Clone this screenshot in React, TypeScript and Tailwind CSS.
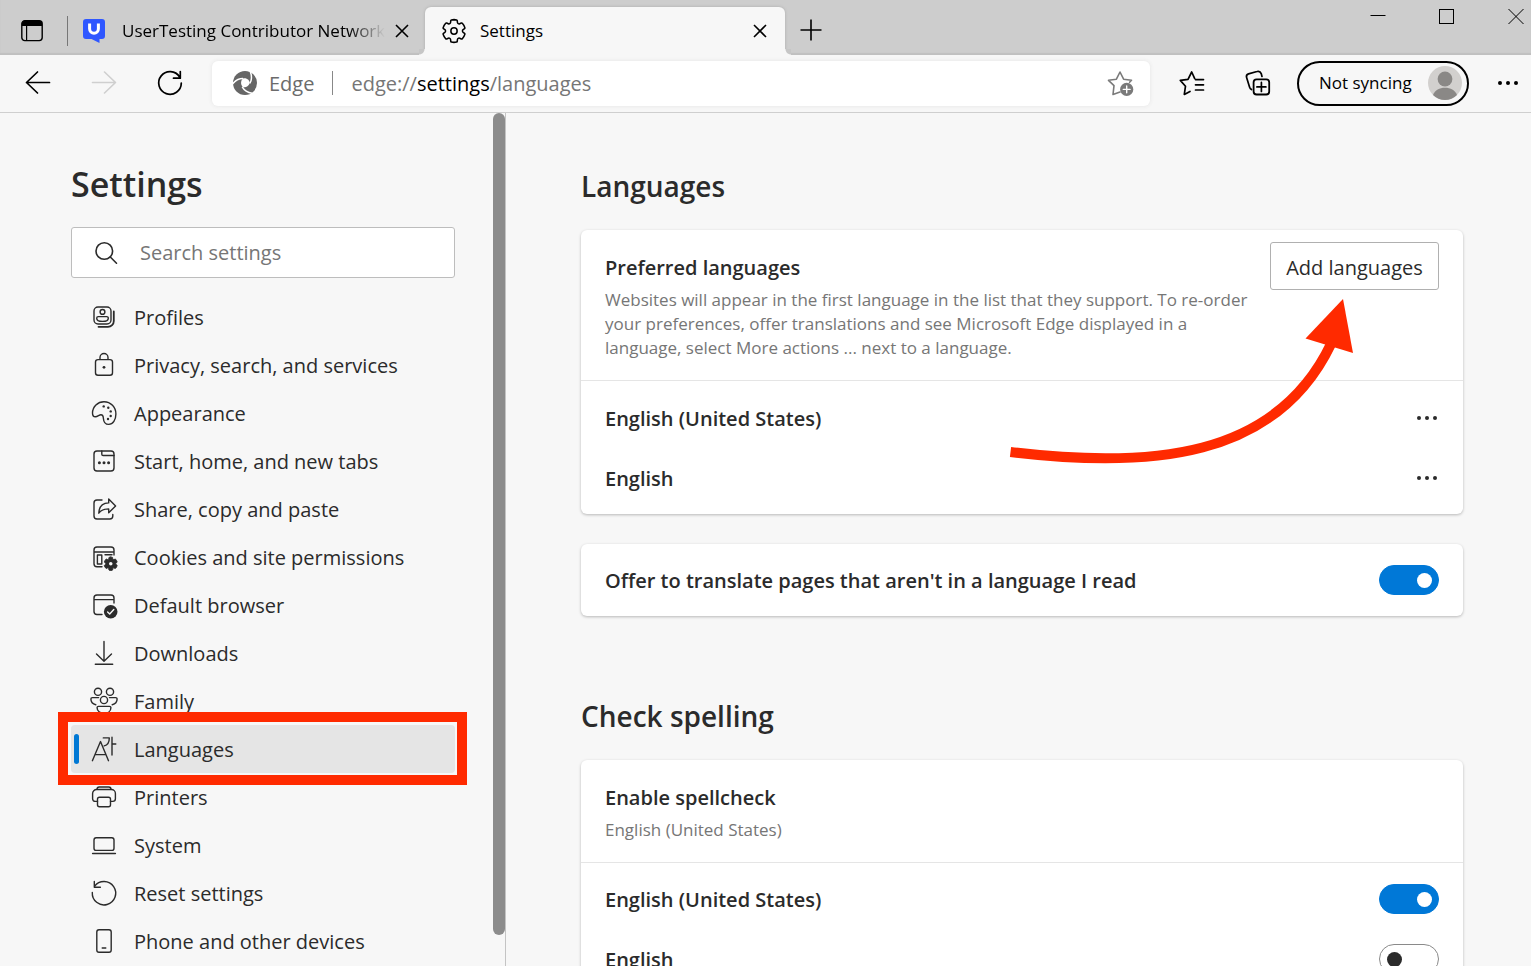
import { useState } from "react";
import type { ReactNode } from "react";

type IconProps = { children: ReactNode; className?: string };

// 28px line icon used in the side menu and the toolbar
function Icon({ children, className = "" }: IconProps) {
  return (
    <svg
      viewBox="0 0 28 28"
      className={`size-7 shrink-0 ${className}`}
      fill="none"
      stroke="currentColor"
      strokeWidth="1.4"
      strokeLinecap="round"
      strokeLinejoin="round"
      aria-hidden="true"
    >
      {children}
    </svg>
  );
}

const GEAR =
  "M12.012 2.25c.734.008 1.465.093 2.182.253a.75.75 0 0 1 .582.649l.17 1.527a1.384 1.384 0 0 0 1.927 1.116l1.401-.615a.75.75 0 0 1 .85.174 9.792 9.792 0 0 1 2.204 3.792.75.75 0 0 1-.271.825l-1.242.916a1.381 1.381 0 0 0 0 2.226l1.243.915a.75.75 0 0 1 .272.826 9.797 9.797 0 0 1-2.204 3.792.75.75 0 0 1-.848.175l-1.407-.617a1.38 1.38 0 0 0-1.926 1.114l-.169 1.526a.75.75 0 0 1-.572.647 9.518 9.518 0 0 1-4.406 0 .75.75 0 0 1-.572-.647l-.168-1.524a1.382 1.382 0 0 0-1.926-1.11l-1.406.616a.75.75 0 0 1-.849-.175 9.798 9.798 0 0 1-2.204-3.796.75.75 0 0 1 .272-.826l1.243-.916a1.38 1.38 0 0 0 0-2.226l-1.243-.914a.75.75 0 0 1-.271-.826 9.793 9.793 0 0 1 2.204-3.792.75.75 0 0 1 .85-.174l1.4.615a1.387 1.387 0 0 0 1.93-1.118l.17-1.526a.75.75 0 0 1 .583-.65c.717-.159 1.45-.243 2.201-.252Z";

const menu: { label: string; icon: ReactNode }[] = [
  {
    label: "Profiles",
    icon: (
      <>
        <rect x="4" y="4" width="17" height="17" rx="4" />
        <circle cx="12.5" cy="8.9" r="2.4" />
        <path d="M8.3 13.6H16.7A1.6 1.6 0 0 1 18.3 15.2C18.3 17.4 15.6 18.4 12.5 18.4S6.7 17.4 6.7 15.2A1.6 1.6 0 0 1 8.3 13.6Z" />
        <path d="M23.8 8.5V18A5.8 5.8 0 0 1 18 23.8H8.5" strokeWidth="1.8" />
      </>
    ),
  },
  {
    label: "Privacy, search, and services",
    icon: (
      <>
        <rect x="5.5" y="8.6" width="17" height="15.6" rx="2.5" />
        <path d="M10 8.4V6.5a4 4 0 0 1 8 0V8.4" />
        <circle cx="14" cy="16.3" r="1.4" fill="currentColor" stroke="none" />
      </>
    ),
  },
  {
    label: "Appearance",
    icon: (
      <>
        <path d="M2.5 14C2.5 7.5 7.8 2.7 14 2.7C20.8 2.7 25.9 8.2 25.9 15C25.9 21 23 25.4 18.7 25.4C14.8 25.4 13.6 22.5 13.4 19.5C13.3 17.3 12.9 15.7 10.9 15.7C9.2 15.7 7.6 17.8 5.4 17.8C3.4 17.8 2.5 16.2 2.5 14Z" />
        <g fill="currentColor" stroke="none">
          <circle cx="13.7" cy="7.4" r="1.2" />
          <circle cx="18.3" cy="8.8" r="1.2" />
          <circle cx="20.7" cy="12.4" r="1.2" />
          <circle cx="20.7" cy="17" r="1.2" />
          <circle cx="18" cy="20" r="1.2" />
        </g>
      </>
    ),
  },
  {
    label: "Start, home, and new tabs",
    icon: (
      <>
        <rect x="4" y="4" width="20" height="20" rx="3" />
        <path d="M11.8 4V7.2A1.3 1.3 0 0 0 13.1 8.5H24" />
        <g fill="currentColor" stroke="none">
          <circle cx="9.4" cy="15.7" r="1.5" />
          <circle cx="14" cy="15.7" r="1.5" />
          <circle cx="18.6" cy="15.7" r="1.5" />
        </g>
      </>
    ),
  },
  {
    label: "Share, copy and paste",
    icon: (
      <>
        <path d="M12 5H7A3 3 0 0 0 4 8V21A3 3 0 0 0 7 24H19.8A3 3 0 0 0 22.8 21V19.5" />
        <path d="M18.7 4L25.6 11L18.7 17.7V13.9C14 13.9 11 15 8.8 18.2C9 12 12.5 8.1 18.7 7.9Z" />
      </>
    ),
  },
  {
    label: "Cookies and site permissions",
    icon: (
      <>
        <path d="M24 12V7A3 3 0 0 0 21 4H7A3 3 0 0 0 4 7V20.7A3 3 0 0 0 7 23.7H12M4 9H24" />
        <rect x="7.4" y="12" width="4.4" height="9" />
        <path d="M15 11.8H22" />
        <g transform="translate(12.6 12.6) scale(.68)">
          <path d={GEAR} fill="currentColor" />
          <circle cx="12" cy="12" r="2.6" fill="#f7f7f7" stroke="none" />
        </g>
      </>
    ),
  },
  {
    label: "Default browser",
    icon: (
      <>
        <path d="M24 12V7A3 3 0 0 0 21 4H7A3 3 0 0 0 4 7V20.5A3 3 0 0 0 7 23.5H12M4 8.6H24" />
        <circle cx="20.7" cy="20.7" r="6.8" fill="currentColor" stroke="none" />
        <path d="M17.6 21L19.7 23L23.8 18.6" stroke="#f7f7f7" />
      </>
    ),
  },
  { label: "Downloads", icon: <path d="M14 2.5V22M6.5 15L14 22.3L21.5 15M5.3 25.2H22.7" /> },
  {
    label: "Family",
    icon: (
      <>
        <circle cx="8" cy="4.8" r="3.6" />
        <circle cx="20" cy="4.8" r="3.6" />
        <circle cx="14" cy="13" r="3.6" />
        <path d="M8.6 10.6H2.4A1.5 1.5 0 0 0 .9 12.1C.9 15 3 17.2 5.8 17.7M19.4 10.6H25.6A1.5 1.5 0 0 1 27.1 12.1C27.1 15 25 17.2 22.2 17.7" />
        <path d="M8.4 19.4H19.6A1.3 1.3 0 0 1 20.9 20.7C20.9 24 18 26.4 14 26.4S7.1 24 7.1 20.7A1.3 1.3 0 0 1 8.4 19.4Z" />
      </>
    ),
  },
  {
    label: "Languages",
    icon: (
      <path d="M2.4 25.7L10.5 6.6L18.5 25.7M5.2 19.6H15.8M13.3 2.9H19.3C19.3 7.5 17.8 10 14.2 10.9M22 2.3V20M22 9H25.8" />
    ),
  },
  {
    label: "Printers",
    icon: (
      <>
        <path d="M7.5 18.4H5.2A2.6 2.6 0 0 1 2.6 15.8V10.5A4 4 0 0 1 6.6 6.5H21.4A4 4 0 0 1 25.4 10.5V15.8A2.6 2.6 0 0 1 22.8 18.4H20.5" />
        <path d="M7 6.3A2.3 2.3 0 0 1 9.3 4H18.7A2.3 2.3 0 0 1 21 6.3" />
        <rect x="7.5" y="14.2" width="13" height="9.6" rx="2" />
      </>
    ),
  },
  {
    label: "System",
    icon: (
      <>
        <rect x="4" y="6.8" width="20" height="12.6" rx="2.2" />
        <path d="M2.6 22.5H25.4" />
      </>
    ),
  },
  {
    label: "Reset settings",
    icon: <path d="M2.3 13.5A11.7 11.7 0 1 0 4.6 7.2M4.3 2.4V8.3H10.4" />,
  },
  {
    label: "Phone and other devices",
    icon: (
      <>
        <rect x="6.8" y="2.7" width="14.4" height="22.6" rx="2.2" />
        <path d="M12.2 21H15.8" />
      </>
    ),
  },
];

function CloseIcon() {
  return (
    <svg viewBox="0 0 14 14" className="size-3.5" stroke="currentColor" strokeWidth="1.6" aria-hidden="true">
      <path d="M1 1L13 13M13 1L1 13" />
    </svg>
  );
}

function Dots() {
  return (
    <svg viewBox="0 0 20 4" className="w-5 h-1" fill="currentColor" aria-hidden="true">
      <circle cx="2" cy="2" r="2" />
      <circle cx="10" cy="2" r="2" />
      <circle cx="18" cy="2" r="2" />
    </svg>
  );
}

function TabStrip() {
  return (
    <div className="flex h-[55px] shrink-0 bg-[#cdcdcd] shadow-[inset_0_-2px_1px_#c0c0c0] text-black">
      <div className="flex w-[425px] items-center pl-[21px] pt-[7px]">
        <button aria-label="Tab actions menu">
          <svg viewBox="0 0 22 22" className="size-[22px]" aria-hidden="true">
            <rect x=".8" y=".8" width="20.4" height="19.8" rx="3" fill="none" stroke="#000" strokeWidth="1.4" />
            <path d="M1 6V3.5A2.7 2.7 0 0 1 3.7 .8H18.3A2.7 2.7 0 0 1 21 3.5V6Z" />
            <path d="M5.6 6V20.6" stroke="#000" strokeWidth="1.2" />
          </svg>
        </button>
        <span className="ml-6 h-[30px] w-px bg-[#777]" />
        <svg viewBox="0 0 24 24" className="ml-[15px] size-6 shrink-0" aria-hidden="true">
          <path
            d="M3 0H19A3 3 0 0 1 22 3V17A3 3 0 0 1 19 20H16.5V24L8.5 20H3A3 3 0 0 1 0 17V3A3 3 0 0 1 3 0Z"
            fill="#2f57ff"
          />
          <path d="M6.6 4.4V9.8A4.4 4.4 0 0 0 15.4 9.8V4.4" fill="none" stroke="#fff" strokeWidth="3" />
        </svg>
        <span className="ml-[15px] flex-1 min-w-0 overflow-hidden whitespace-nowrap text-[17px] leading-7 [mask-image:linear-gradient(to_right,#000_86%,transparent)]">
          UserTesting Contributor Network
        </span>
        <button aria-label="Close tab" className="ml-2.5 mr-4">
          <CloseIcon />
        </button>
      </div>

      <div className="relative mt-[7px] flex w-[360px] items-center rounded-t-md bg-[#f7f7f7] pl-[15px] pr-[18px] shadow-[0_0_3px_#aaa] [clip-path:inset(-4px_-6px_0_-6px)]">
        {/* curved feet of the active tab */}
        <span className="absolute -left-1.5 bottom-0 size-1.5 bg-[radial-gradient(circle_at_0_0,#c6c6c6_5px,#f7f7f7_6px)]" />
        <span className="absolute -right-1.5 bottom-0 size-1.5 bg-[radial-gradient(circle_at_100%_0,#c6c6c6_5px,#f7f7f7_6px)]" />
        <svg
          viewBox="0 0 24 24"
          className="size-7"
          fill="none"
          stroke="currentColor"
          strokeWidth="1.3"
          aria-hidden="true"
        >
          <path d={GEAR} />
          <circle cx="12" cy="12" r="2.7" />
        </svg>
        <span className="ml-3 flex-1 text-[17px] leading-7">Settings</span>
        <button aria-label="Close tab">
          <CloseIcon />
        </button>
      </div>

      <button aria-label="New tab" className="ml-[15px] mt-1">
        <svg viewBox="0 0 22 22" className="size-[22px]" stroke="currentColor" strokeWidth="1.6" aria-hidden="true">
          <path d="M11 .5V21.5M.5 11H21.5" />
        </svg>
      </button>

      <div className="ml-auto flex items-start gap-[53px] pr-[7px] pt-2">
        <button aria-label="Minimize">
          <svg viewBox="0 0 16 16" className="size-4" stroke="currentColor" aria-hidden="true">
            <path d="M.5 7.5H15.5" />
          </svg>
        </button>
        <button aria-label="Maximize">
          <svg viewBox="0 0 16 16" className="size-4" fill="none" stroke="currentColor" aria-hidden="true">
            <rect x=".5" y="1.5" width="14" height="14" />
          </svg>
        </button>
        <button aria-label="Close window">
          <svg viewBox="0 0 16 16" className="size-4" stroke="currentColor" aria-hidden="true">
            <path d="M.5 1L15.5 16M15.5 1L.5 16" />
          </svg>
        </button>
      </div>
    </div>
  );
}

function Toolbar() {
  return (
    <div className="flex h-[58px] shrink-0 items-center border-b border-[#cfcfcf] bg-[#f7f7f7] pb-px pl-[5px] text-black">
      <button aria-label="Back" className="flex w-[66px] justify-center">
        <Icon>
          <path d="M25.5 13.5H2.5M13.5 3L2.5 13.5L13.5 24" strokeWidth="1.7" />
        </Icon>
      </button>
      <button aria-label="Forward" disabled className="flex w-[66px] justify-center text-[#cfcfcf]">
        <Icon>
          <path d="M2.5 13.5H25.5M14.5 3L25.5 13.5L14.5 24" strokeWidth="1.6" />
        </Icon>
      </button>
      <button aria-label="Refresh" className="flex w-[66px] justify-center">
        <Icon>
          <path d="M25.3 14A11.3 11.3 0 1 1 23.6 8M24.3 2.6V9.2H17.5" strokeWidth="1.7" />
        </Icon>
      </button>

      <div className="ml-[9px] flex h-[45px] min-w-0 flex-1 items-center rounded-md bg-white pl-[21px] pr-4 text-[20px] leading-7 text-[#6b6b6b] shadow-[0_0_4px_#e4e4e4]">
        <svg viewBox="0 0 24 24" className="size-6 shrink-0" aria-hidden="true">
          <circle cx="12" cy="12" r="12" fill="#666" />
          <g fill="none" stroke="#fff" strokeWidth="1.5">
            <path d="M10 7.6C6 7.6 2.6 9.2-.5 13" />
            <path d="M10 7.6C6 7.6 2.6 9.2-.5 13" transform="rotate(120 12 12)" />
            <path d="M10 7.6C6 7.6 2.6 9.2-.5 13" transform="rotate(240 12 12)" />
          </g>
          <path d="M10 7.4C14 6.6 17 9.4 16.6 12.6C15.4 15.4 12.6 16.8 10 16C7.4 13.6 7.4 10 10 7.4Z" fill="#fff" />
        </svg>
        <span className="ml-3 pt-0.5">Edge</span>
        <span className="mx-[18px] h-6 w-px bg-[#888]" />
        <div
          role="textbox"
          tabIndex={0}
          aria-label="Address"
          className="flex-1 whitespace-nowrap pt-0.5 text-[#767676]"
        >
          edge://<span className="text-black">settings</span>/languages
        </div>
        <button aria-label="Add this page to favorites" className="text-[#7a7a7a]">
          <Icon>
            <path
              d="M14 23L7 25.5L8 16.6L2.5 11.3L10.4 10.2L14 3L17.6 10.2L25.5 11.3L23.6 13.2"
              strokeWidth="1.6"
            />
            <circle cx="20.7" cy="20.4" r="6.6" fill="currentColor" stroke="none" />
            <path d="M20.7 17V23.8M17.3 20.4H24.1" stroke="#fff" />
          </Icon>
        </button>
      </div>

      <button aria-label="Favorites" className="ml-[9px] flex w-[66px] justify-center">
        <Icon>
          <path
            d="M12 22.4L6.3 25.4L7.5 17.2L2.3 11.4L10 10.4L13.7 3L16.6 9.4M17.5 10.6H25.5M17.5 15.8H25.5M17.5 21H25.5"
            strokeWidth="1.7"
          />
        </Icon>
      </button>
      <button aria-label="Collections" className="flex w-[66px] justify-center">
        <Icon>
          <path
            d="M7.5 20.5C6.5 20 6 19.3 5.6 18.2L2.6 8.6A3 3 0 0 1 4.5 4.9L13 2.5A3.4 3.4 0 0 1 17.2 4.6L18 7.4"
            strokeWidth="1.7"
          />
          <rect x="9.6" y="10.3" width="15.6" height="15.2" rx="3" strokeWidth="1.8" />
          <path d="M17.4 13.4V22.4M12.9 17.9H21.9" strokeWidth="1.7" />
        </Icon>
      </button>
      <button className="ml-1.5 flex h-[45px] w-[172px] items-center justify-between rounded-full border-2 border-black pl-5 pr-[5px] text-[17px] leading-7">
        Not syncing
        <svg viewBox="0 0 34 34" className="size-[34px]" aria-hidden="true">
          <circle cx="17" cy="17" r="17" fill="#d2d0ce" />
          <circle cx="17" cy="13" r="7.4" fill="#8a8886" />
          <path d="M5 29C7 24 11.5 21.8 17 21.8S27 24 29 29A17 17 0 0 1 5 29Z" fill="#8a8886" />
        </svg>
      </button>
      <button aria-label="Settings and more" className="ml-4 flex w-[46px] justify-center">
        <Dots />
      </button>
    </div>
  );
}

function Sidebar({ current, onSelect }: { current: string; onSelect: (label: string) => void }) {
  return (
    <aside className="flex w-[506px] shrink-0 justify-between border-r border-[#c4c4c4] pl-[71px]">
      <div className="w-[384px] pt-[50px]">
        <h1 className="text-[34px] font-semibold leading-[42px]">Settings</h1>
        <div className="mt-[22px] flex h-[51px] items-center rounded-[3px] border border-[#bdbdbd] bg-white pl-5">
          <label htmlFor="search" aria-label="Search settings">
            <Icon>
              <circle cx="12.3" cy="12" r="8.3" strokeWidth="1.6" />
              <path d="M18.3 18L24.5 24.2" strokeWidth="1.6" />
            </Icon>
          </label>
          <input
            id="search"
            type="search"
            placeholder="Search settings"
            className="ml-5 min-w-0 flex-1 text-[20px] leading-7 outline-none placeholder:text-[#767676]"
          />
        </div>
        <nav aria-label="Settings" className="mt-[15px]">
          <ul>
            {menu.map(({ label, icon }) => (
              <li key={label} className="relative">
                <a
                  href="#"
                  onClick={() => onSelect(label)}
                  className={`flex h-12 items-center gap-4 rounded pl-[19px] text-[20px] leading-7 ${
                    label === current ? "bg-[#e5e5e5]" : ""
                  }`}
                >
                  <Icon>{icon}</Icon>
                  <span className="pt-0.5">{label}</span>
                </a>
                {label === current && (
                  <>
                    <span className="absolute left-[3px] top-[9px] h-[30px] w-[5px] rounded-sm bg-[#0078d4]" />
                    {/* callout box */}
                    <span className="pointer-events-none absolute -bottom-3 -left-[13px] -right-3 -top-[13px] z-10 border-10 border-[#ff2a00]" />
                  </>
                )}
              </li>
            ))}
          </ul>
        </nav>
      </div>
      <div className="h-[822px] w-3 rounded-full bg-[#8c8c8c]" />
    </aside>
  );
}

function Card({ children }: { children: ReactNode }) {
  return (
    <section className="relative rounded-md bg-white shadow-[0_1px_3px_rgba(0,0,0,0.26)]">
      {children}
    </section>
  );
}

function Toggle({ id, defaultChecked = false }: { id: string; defaultChecked?: boolean }) {
  return (
    <input
      id={id}
      type="checkbox"
      role="switch"
      defaultChecked={defaultChecked}
      className="flex h-[30px] w-[60px] shrink-0 appearance-none items-center rounded-full border border-[#8a8a8a] bg-white px-[7px] before:size-[15px] before:rounded-full before:bg-[#2b2b2b] checked:justify-end checked:border-[#0078d7] checked:bg-[#0078d7] checked:px-1.5 checked:before:bg-white"
    />
  );
}

const rowText = "text-[20px] font-semibold leading-7";

export default function App() {
  const [current, setCurrent] = useState("Languages");

  return (
    <div className="flex h-screen flex-col overflow-hidden bg-[#f7f7f7] font-['Open_Sans',sans-serif] text-[#2b2b2b]">
      <TabStrip />
      <Toolbar />
      <div className="flex min-h-0 flex-1 overflow-hidden">
        <Sidebar current={current} onSelect={setCurrent} />
        <main className="min-w-0 flex-1 pl-[75px] pr-[68px] pt-[54px]">
          <h2 className="mb-[25px] text-[28px] font-semibold leading-[38px]">Languages</h2>
          <Card>
            <div className="flex justify-between border-b border-[#e5e5e5] px-6 pb-5">
              <div className="max-w-[660px] pt-6">
                <h3 className={rowText}>Preferred languages</h3>
                <p className="mt-1.5 text-[17px] leading-6 text-[#767676]">
                  Websites will appear in the first language in the list that they support. To re-order your
                  preferences, offer translations and see Microsoft Edge displayed in a language, select More
                  actions ... next to a language.
                </p>
              </div>
              <button className="mt-3 h-12 w-[169px] shrink-0 rounded-[3px] border border-[#b0b0b0] pt-1 text-[20px] leading-7">
                Add languages
              </button>
            </div>
            <ul className="pb-1.5 pl-6 pr-[26px] pt-[7px]">
              {["English (United States)", "English"].map((name) => (
                <li key={name} className="flex h-[60px] items-center justify-between">
                  <span className={`pt-0.5 ${rowText}`}>{name}</span>
                  <button aria-label={`More actions for ${name}`}>
                    <Dots />
                  </button>
                </li>
              ))}
            </ul>
            {/* arrow pointing at the Add languages button */}
            <svg
              viewBox="0 0 360 180"
              className="pointer-events-none absolute right-[103px] top-[60px] h-[180px] w-[360px]"
              aria-hidden="true"
            >
              <path d="M10.5 162C150 179 276 169 331 54" fill="none" stroke="#ff2a00" strokeWidth="10" />
              <path d="M343 9L305.5 48.5L353 63Z" fill="#ff2a00" />
            </svg>
          </Card>

          <div className="mt-[30px]">
            <Card>
              <div className="flex h-[72px] items-center justify-between px-6">
                <label htmlFor="translate" className={`pt-0.5 ${rowText}`}>
                  Offer to translate pages that aren't in a language I read
                </label>
                <Toggle id="translate" defaultChecked />
              </div>
            </Card>
          </div>

          <h2 className="mb-[25px] mt-[81px] text-[28px] font-semibold leading-[38px]">Check spelling</h2>
          <Card>
            <div className="border-b border-[#e5e5e5] px-6 pb-5 pt-6">
              <h3 className={rowText}>Enable spellcheck</h3>
              <p className="mt-1.5 text-[17px] leading-6 text-[#767676]">English (United States)</p>
            </div>
            <div className="px-6 py-1.5">
              <div className="flex h-[60px] items-center justify-between">
                <label htmlFor="spell-us" className={`pt-0.5 ${rowText}`}>
                  English (United States)
                </label>
                <Toggle id="spell-us" defaultChecked />
              </div>
              <div className="flex h-[60px] items-center justify-between">
                <label htmlFor="spell-en" className={`pt-0.5 ${rowText}`}>
                  English
                </label>
                <Toggle id="spell-en" />
              </div>
            </div>
          </Card>
        </main>
      </div>
    </div>
  );
}
